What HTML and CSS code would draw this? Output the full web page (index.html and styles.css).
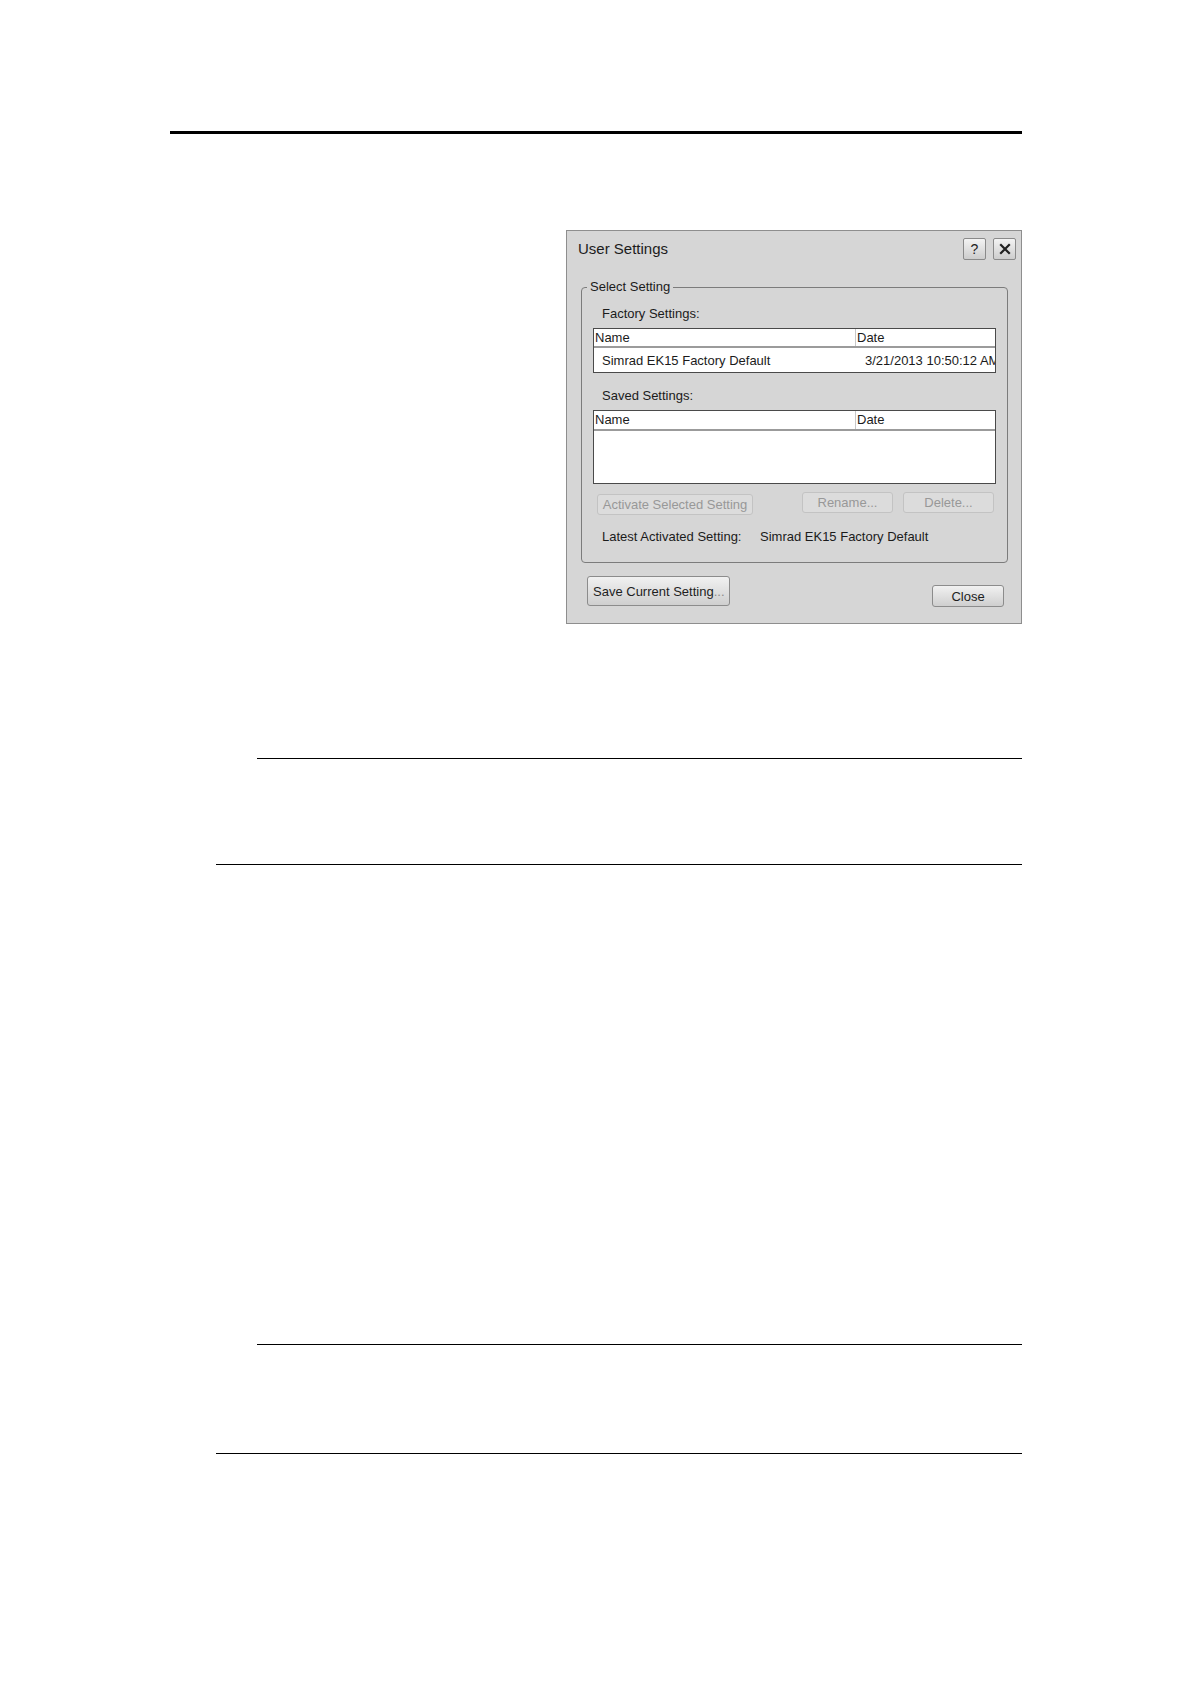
FILE: index.html
```html
<!DOCTYPE html>
<html>
<head>
<meta charset="utf-8">
<title>User Settings</title>
<link rel="stylesheet" href="styles.css">
</head>
<body>
<div class="page">
  <div class="top-rule"></div>

  <div class="dialog">
    <div class="titlebar">
      <span class="title">User Settings</span>
      <div class="title-buttons">
        <button class="tbtn" type="button">?</button>
        <button class="tbtn" type="button">
          <svg width="12" height="12" viewBox="0 0 12 12"><path d="M2 2 L10 10 M10 2 L2 10" stroke="#222" stroke-width="2.2" stroke-linecap="square"/></svg>
        </button>
      </div>
    </div>

    <fieldset class="group">
      <legend>Select Setting</legend>
      <div class="label">Factory Settings:</div>
      <div class="table t1">
        <div class="thead">
          <div class="col-name">Name</div>
          <div class="col-date">Date</div>
        </div>
        <div class="trow">
          <div class="cell-name">Simrad EK15 Factory Default</div>
          <div class="cell-date">3/21/2013 10:50:12 AM</div>
        </div>
      </div>

      <div class="label second">Saved Settings:</div>
      <div class="table t2">
        <div class="thead">
          <div class="col-name">Name</div>
          <div class="col-date">Date</div>
        </div>
      </div>

      <div class="btn-row">
        <button class="btn disabled activate" type="button">Activate Selected Setting</button>
        <div class="btn-right">
          <button class="btn disabled small" type="button">Rename...</button>
          <button class="btn disabled small" type="button">Delete...</button>
        </div>
      </div>

      <div class="latest">
        <span class="latest-label">Latest Activated Setting:</span>
        <span class="latest-value">Simrad EK15 Factory Default</span>
      </div>
    </fieldset>

    <div class="footer">
      <button class="btn save" type="button">Save Current Setting<span class="dots">...</span></button>
      <button class="btn close" type="button">Close</button>
    </div>
  </div>

  <div class="note">
    <div class="note-top"></div>
    <div class="note-space"></div>
  </div>
  <div class="note-end"></div>

  <div class="note later">
    <div class="note-top"></div>
    <div class="note-space second"></div>
  </div>
  <div class="note-end"></div>
</div>
</body>
</html>
```

FILE: styles.css
```css
html, body {
  margin: 0;
  padding: 0;
  background: #ffffff;
}

body {
  font-family: "Liberation Sans", Arial, sans-serif;
  color: #1b1b1b;
}

.page {
  width: 852px;
  margin-left: 170px;
  padding-top: 131px;
}

.top-rule {
  height: 0;
  border-top: 3px solid #000;
}

/* Dialog */
.dialog {
  width: 456px;
  height: 394px;
  box-sizing: border-box;
  margin: 96px 0 0 auto;
  border: 1px solid #8e8e8e;
  background: #d6d6d6;
  display: flex;
  flex-direction: column;
}

.titlebar {
  height: 35px;
  display: flex;
  align-items: center;
  justify-content: space-between;
  padding: 0 5px 0 11px;
}

.title {
  font-size: 15px;
  color: #1c1c1c;
}

.title-buttons {
  display: flex;
  gap: 7px;
}

.tbtn {
  width: 23px;
  height: 22px;
  box-sizing: border-box;
  padding: 0;
  border: 1px solid #8a8a8a;
  border-radius: 2px;
  background: linear-gradient(#f3f3f3, #cdcdcd);
  font-family: "Liberation Sans", Arial, sans-serif;
  font-size: 14px;
  color: #222;
  display: flex;
  align-items: center;
  justify-content: center;
}

/* Group box */
.group {
  margin: 14px 13px 0 14px;
  padding: 0 11px 18px 11px;
  border: 1px solid #7c7c7c;
  border-radius: 4px;
  min-width: 0;
}

.group legend {
  font-size: 13px;
  line-height: 14px;
  padding: 0 3px;
  margin-left: -6px;
  color: #1b1b1b;
}

.label {
  font-size: 13px;
  line-height: 14px;
  padding-left: 9px;
  margin-top: 13px;
}

.label.second {
  margin-top: 16px;
}

.table {
  margin-top: 7px;
  border: 1px solid #4a4a4a;
  background: #ffffff;
  box-sizing: border-box;
  overflow: hidden;
}

.table.t1 { height: 45px; }
.table.t2 { height: 74px; }

.thead {
  display: flex;
  height: 17px;
  border-bottom: 2px solid #9b9b9b;
  font-size: 13px;
  line-height: 17px;
}

.t2 .thead {
  height: 18px;
  line-height: 18px;
}

.col-name {
  width: 262px;
  padding-left: 1px;
  box-sizing: border-box;
  border-right: 1px solid #c8c8c8;
}

.col-date {
  padding-left: 1px;
}

.trow {
  display: flex;
  height: 24px;
  font-size: 13px;
  line-height: 25px;
  white-space: nowrap;
}

.cell-name {
  width: 262px;
  padding-left: 8px;
  box-sizing: border-box;
}

.cell-date {
  flex: 1;
  min-width: 0;
  overflow: hidden;
  padding-left: 9px;
}

/* Buttons */
.btn {
  font-family: "Liberation Sans", Arial, sans-serif;
  font-size: 13px;
  box-sizing: border-box;
  padding: 0;
  border-radius: 3px;
  white-space: nowrap;
}

.btn.disabled {
  background: #dcdcdc;
  border: 1px solid #c3c3c3;
  color: #989898;
}

.btn-row {
  display: flex;
  justify-content: space-between;
  align-items: flex-start;
  margin-top: 8px;
  padding-left: 4px;
  padding-right: 2px;
}

.activate {
  width: 156px;
  height: 21px;
  margin-top: 2px;
}

.btn-right {
  display: flex;
  gap: 10px;
}

.btn.small {
  width: 91px;
  height: 21px;
}

.latest {
  margin-top: 15px;
  font-size: 13px;
  line-height: 14px;
  padding-left: 9px;
  display: flex;
}

.latest-label {
  width: 158px;
}

/* Footer */
.footer {
  display: flex;
  justify-content: space-between;
  align-items: flex-start;
  padding: 0 17px 0 20px;
  margin-top: 13px;
}

.btn.save,
.btn.close {
  border: 1px solid #8c8c8c;
  background: linear-gradient(#f1f1f1, #cfcfcf);
  color: #1e1e1e;
}

.btn.save {
  width: 143px;
  height: 30px;
  text-align: left;
  padding-left: 5px;
}

.dots {
  color: #8a8a8a;
}

.btn.close {
  width: 72px;
  height: 22px;
  margin-top: 9px;
}

/* Note rules */
.note {
  margin-left: 87px;
  margin-top: 134px;
}

.note.later {
  margin-top: 479px;
}

.note-top {
  border-top: 1px solid #000;
}

.note-space {
  height: 105px;
}

.note-space.second {
  height: 108px;
}

.note-end {
  margin-left: 46px;
  border-top: 1px solid #000;
}
```
